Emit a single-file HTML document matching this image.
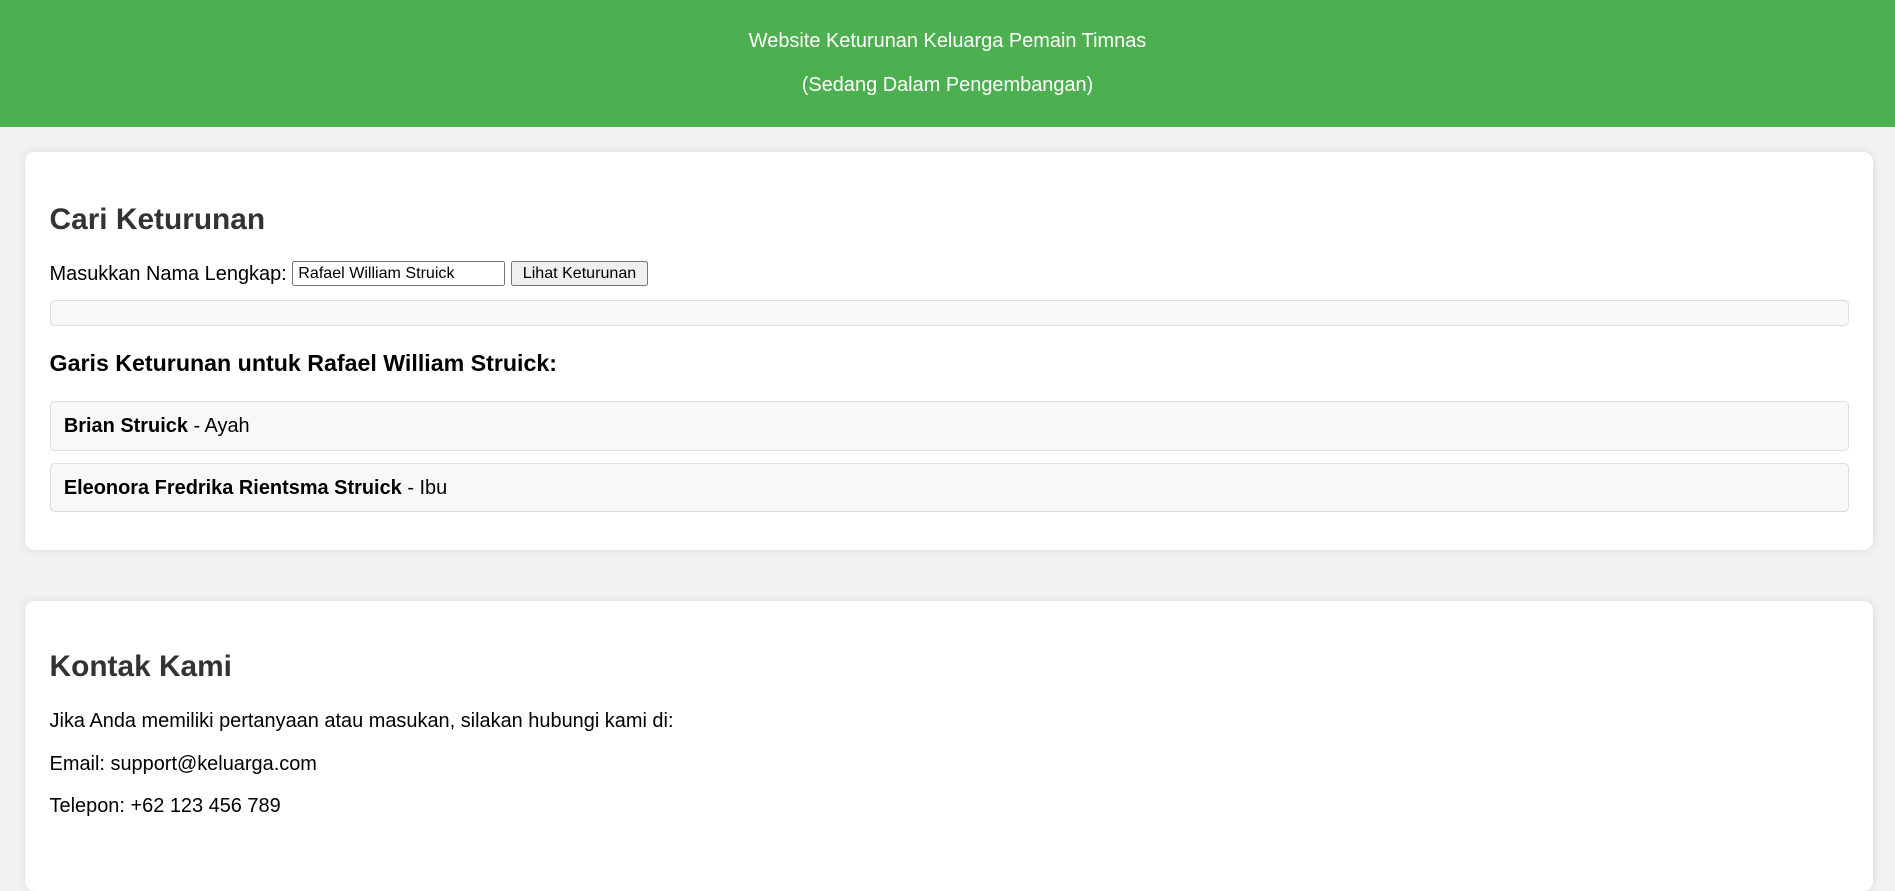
<!DOCTYPE html>
<html><head><meta charset="utf-8"><style>
html,body{margin:0;padding:0}
body{background:#f2f2f2;font-family:"Liberation Sans",Arial,sans-serif;width:1895px;height:855px;overflow:hidden;position:relative}
#z{zoom:1.2086;width:1568px;height:708px;position:relative}
.hdr{position:absolute;left:0;top:0;width:1568px;height:105px;background:#4caf50;color:#fff;font-size:16.5px;text-align:center}
.hdr p{position:absolute;left:0;right:0;margin:0;line-height:20px}
.card{position:absolute;left:21px;width:1529px;background:#fff;border-radius:8px;box-shadow:0 0 8px rgba(0,0,0,0.1)}
.a{position:absolute;white-space:nowrap}
h2{margin:0;font-size:24.7px;color:#333;font-weight:bold;line-height:28px}
.t{font-size:16.5px;color:#000;line-height:20px}
.box{position:absolute;left:20px;width:1489px;background:#f8f8f8;border:1px solid #ddd;border-radius:4px;box-sizing:border-box}
</style></head><body><div id="z">
<div class="hdr"><p style="top:24px">Website Keturunan Keluarga Pemain Timnas</p><p style="top:60px">(Sedang Dalam Pengembangan)</p></div>
<div class="card" style="top:126px;height:329px">
 <h2 class="a" style="left:20px;top:42px">Cari Keturunan</h2>
 <div class="a t" style="left:20px;top:91px">Masukkan Nama Lengkap:</div>
 <div class="a" style="left:221px;top:90px;width:176px;height:21px;border:1px solid #767676;box-sizing:border-box;border-radius:2px;font-size:13.3px;line-height:19px;padding-left:4px">Rafael William Struick</div>
 <div class="a" style="left:402px;top:90px;width:113px;height:21px;border:1px solid #767676;box-sizing:border-box;border-radius:2px;background:#efefef;font-size:13.3px;line-height:19px;text-align:center">Lihat Keturunan</div>
 <div class="box" style="top:122px;height:22px"></div>
 <div class="a" style="left:20px;top:164px;font-size:19.2px;font-weight:bold;line-height:22px">Garis Keturunan untuk Rafael William Struick:</div>
 <div class="box t" style="top:206px;height:41px;padding:10px 11px"><b>Brian Struick</b> - Ayah</div>
 <div class="box t" style="top:257px;height:41px;padding:10px 11px"><b>Eleonora Fredrika Rientsma Struick</b> - Ibu</div>
</div>
<div class="card" style="top:497px;height:240px">
 <h2 class="a" style="left:20px;top:41px">Kontak Kami</h2>
 <div class="a t" style="left:20px;top:90px">Jika Anda memiliki pertanyaan atau masukan, silakan hubungi kami di:</div>
 <div class="a t" style="left:20px;top:125px">Email: support@keluarga.com</div>
 <div class="a t" style="left:20px;top:160px">Telepon: +62 123 456 789</div>
</div>
</div></body></html>
